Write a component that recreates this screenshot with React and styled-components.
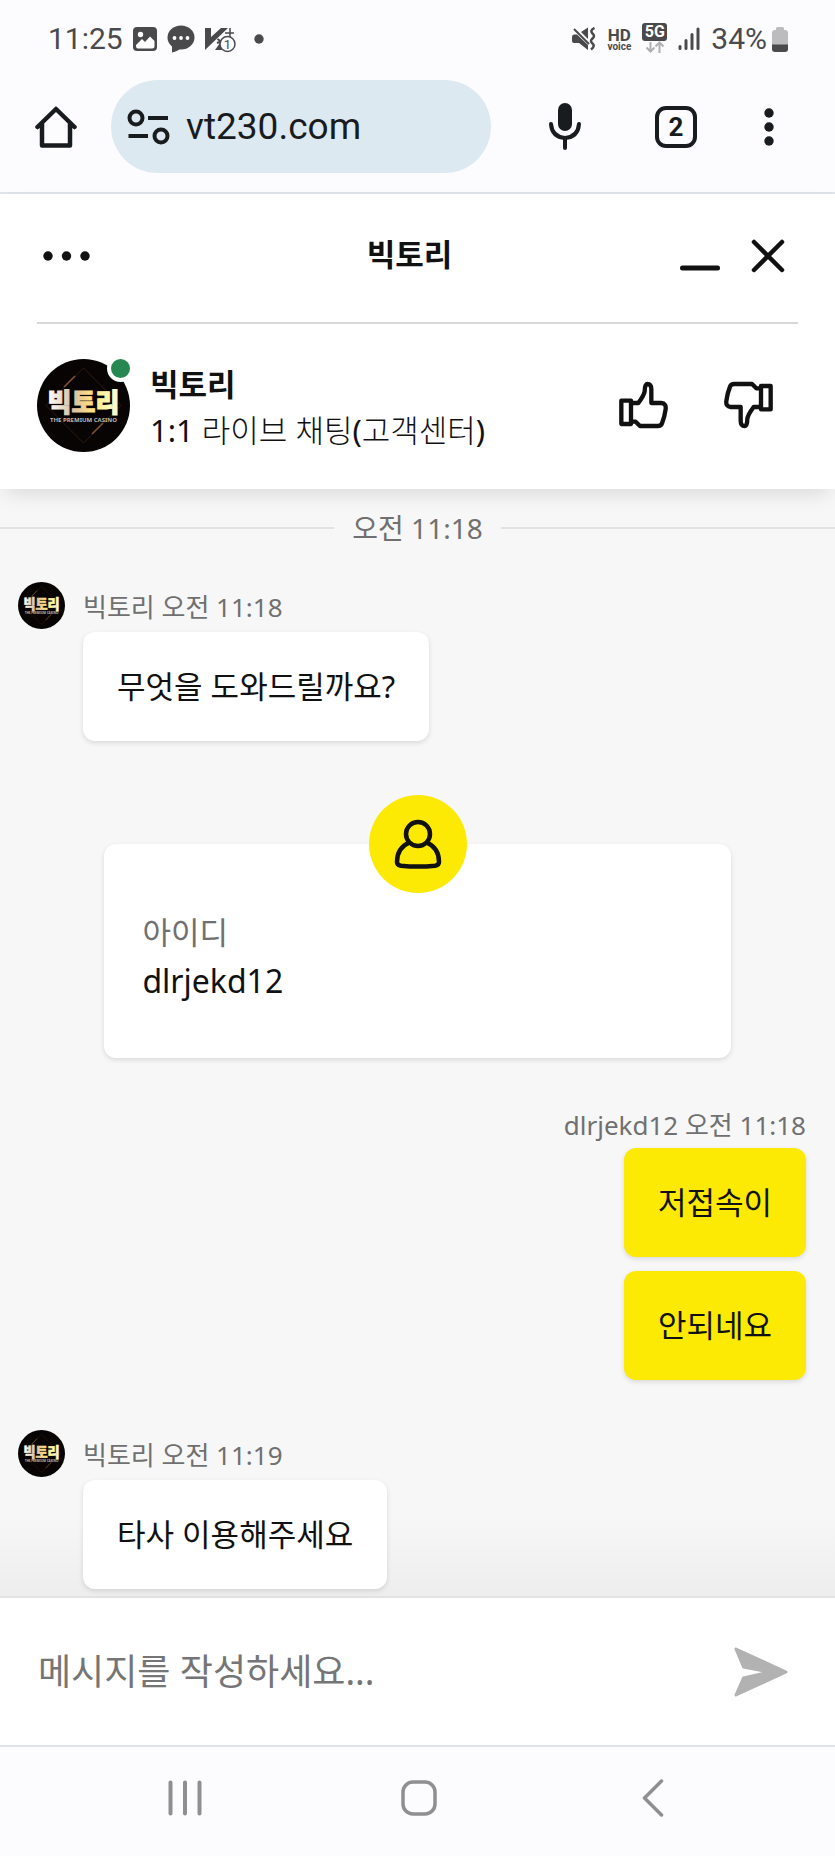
import React, { useState } from 'react'
import styled, { createGlobalStyle } from 'styled-components'

const GlobalStyle = createGlobalStyle`
  * {
    box-sizing: border-box;
  }
  body {
    margin: 0;
    background: #f7f7f7;
    font-family: "Noto Sans", "Noto Sans CJK KR", sans-serif;
    color: #111;
  }
  svg {
    display: block;
    flex: none;
  }
`

const Page = styled.div`
  display: flex;
  flex-direction: column;
  min-height: 100vh;
`

/* phone status bar */
const StatusBar = styled.div`
  display: flex;
  align-items: center;
  justify-content: space-between;
  height: 78px;
  padding: 0 47px 0 48px;
  background: #fcfcfe;
  color: #4a4a4c;
  font-family: Roboto, sans-serif;
  font-size: 30px;
  line-height: 34px;
`
const StatusGroup = styled.div`
  display: flex;
  align-items: center;
  gap: ${(props) => props.$gap};
`
const HdVoice = styled.div`
  display: flex;
  flex-direction: column;
  align-items: center;
`
const HdText = styled.span`
  font-size: 17px;
  font-weight: 700;
  line-height: 14px;
`
const VoiceText = styled.span`
  font-size: 10px;
  font-weight: 700;
  line-height: 9px;
`
const Network = styled.div`
  display: flex;
  flex-direction: column;
  align-items: center;
  padding-bottom: 2px;
`
const NetworkBadge = styled.span`
  width: 25px;
  border-radius: 3px;
  background: #4a4a4c;
  color: #fff;
  font-size: 16px;
  font-weight: 700;
  line-height: 18px;
  text-align: center;
`
const Battery = styled.div`
  display: flex;
  align-items: center;
  gap: 5px;
`

/* browser toolbar */
const Toolbar = styled.div`
  display: flex;
  align-items: center;
  height: 116px;
  padding: 0 10px 17px 32px;
  border-bottom: 2px solid #dde3e8;
  background: #fcfcfe;
`
const IconButton = styled.button`
  display: flex;
  align-items: center;
  justify-content: center;
  flex: none;
  width: ${(props) => props.$width || '48px'};
  height: 48px;
  padding: 0;
  border: none;
  background: none;
  color: ${(props) => props.$color || '#191c1e'};
  cursor: pointer;
`
const AddressPill = styled.div`
  display: flex;
  flex: 1;
  align-items: center;
  gap: 16px;
  min-width: 0;
  height: 93px;
  margin-left: 31px;
  padding: 0 24px 0 16px;
  border-radius: 47px;
  background: #dde9f1;
`
const AddressInput = styled.input`
  flex: 1;
  min-width: 0;
  padding: 0;
  border: none;
  outline: none;
  background: none;
  color: #191c1e;
  font-family: Roboto, sans-serif;
  font-size: 37px;
`
const TabCount = styled.span`
  display: flex;
  align-items: center;
  justify-content: center;
  width: 42px;
  height: 42px;
  border: 4px solid #191c1e;
  border-radius: 11px;
  font-family: Roboto, sans-serif;
  font-size: 26px;
  font-weight: 700;
  line-height: 34px;
`

/* chat header */
const ChatHeader = styled.header`
  position: relative;
  z-index: 1;
  padding: 0 37px;
  background: #fff;
  box-shadow: 0 10px 20px -6px rgba(0, 0, 0, 0.13);
`
const TitleBar = styled.div`
  display: grid;
  grid-template-columns: 110px 1fr 126px;
  align-items: center;
  height: 130px;
  padding-bottom: 4px;
  border-bottom: 2px solid #d8d8d8;
`
const Title = styled.h1`
  margin: 0;
  padding-bottom: 4px;
  font-size: 31px;
  font-weight: 700;
  line-height: 44px;
  text-align: center;
`
const WindowButtons = styled.div`
  display: flex;
  justify-content: flex-end;
  gap: 20px;
  padding-right: 6px;
`
const AgentBar = styled.div`
  display: flex;
  align-items: center;
  height: 165px;
  padding: 0 25px 3px 0;
`
const AvatarBox = styled.div`
  position: relative;
  flex: none;
`
const OnlineDot = styled.span`
  position: absolute;
  top: -4px;
  right: -4px;
  width: 27px;
  height: 27px;
  border: 4px solid #fff;
  border-radius: 50%;
  background: #268750;
`
const AgentInfo = styled.div`
  flex: 1;
  min-width: 0;
  margin-left: 20px;
  padding-top: 3px;
`
const AgentName = styled.div`
  font-size: 31px;
  font-weight: 700;
  line-height: 46px;
`
const AgentText = styled.div`
  font-family: "Noto Sans", "Noto Sans CJK KR Light", "Noto Sans CJK KR", sans-serif;
  font-size: 31px;
  line-height: 46px;
  white-space: nowrap;
`
const RateButtons = styled.div`
  display: flex;
  gap: 58px;
`

/* messages */
const Messages = styled.main`
  flex: 1;
  padding-bottom: 7px;
  background: linear-gradient(to top, rgba(0, 0, 0, 0.04), rgba(0, 0, 0, 0) 80px), #f7f7f7;
`
const TimeDivider = styled.div`
  display: flex;
  align-items: center;
  gap: 18px;
  height: 36px;
  margin-top: 21px;
  color: #707070;
  font-size: 28px;
  line-height: 36px;
  &::before,
  &::after {
    content: '';
    flex: 1;
    height: 2px;
    background: #e2e2e2;
  }
`
const AgentMessage = styled.section`
  display: flex;
  align-items: flex-start;
  gap: 18px;
  margin-top: ${(props) => props.$top};
  padding: 0 29px 0 18px;
`
const UserMessage = styled.section`
  display: flex;
  flex-direction: column;
  align-items: flex-end;
  margin-top: 49px;
  padding: 0 29px;
`
const Meta = styled.div`
  height: ${(props) => props.$height};
  color: #707070;
  font-size: 26px;
  line-height: 36px;
`
const AgentMeta = styled(Meta)`
  padding-top: 7px;
`
const Bubble = styled.div`
  width: fit-content;
  padding: 32px 34px 33px;
  border-radius: 12px;
  background: ${(props) => (props.$mine ? '#fcea05' : '#fff')};
  box-shadow: 0 2px 5px rgba(0, 0, 0, 0.12);
  font-size: 31px;
  line-height: 44px;
  & + & {
    margin-top: 14px;
  }
`
const ProfileCard = styled.section`
  position: relative;
  width: 75%;
  margin: 103px auto 0;
  padding: 64px 38px 53px;
  border-radius: 12px;
  background: #fff;
  box-shadow: 0 2px 5px rgba(0, 0, 0, 0.12);
`
const ProfileBadge = styled.div`
  position: absolute;
  top: -49px;
  left: 50%;
  display: flex;
  align-items: center;
  justify-content: center;
  width: 98px;
  height: 98px;
  margin-left: -49px;
  border-radius: 50%;
  background: #fcea05;
`
const FieldLabel = styled.div`
  color: #707070;
  font-size: 31px;
  line-height: 48px;
`
const FieldValue = styled.div`
  font-size: 32px;
  line-height: 49px;
`

/* composer + android navigation */
const Composer = styled.form`
  display: flex;
  align-items: center;
  height: 149px;
  padding: 0 38px;
  border-top: 2px solid #e2e2e2;
  background: #fff;
`
const MessageInput = styled.input`
  flex: 1;
  min-width: 0;
  padding: 0;
  border: none;
  outline: none;
  background: none;
  font-family: inherit;
  font-size: 36px;
  line-height: 52px;
  &::placeholder {
    color: #757575;
    opacity: 1;
  }
`
const NavBar = styled.nav`
  display: flex;
  align-items: center;
  justify-content: space-between;
  height: 112px;
  padding: 0 65px 8px 68px;
  border-top: 2px solid #dde3e8;
  background: #fcfcfe;
`

const PictureIcon = () => (
  <svg width="24" height="24" viewBox="0 0 24 24">
    <rect width="24" height="24" rx="4" fill="#4a4a4c" />
    <circle cx="7.500" cy="7.500" r="2.700" fill="#fff" />
    <path d="M3 18 L9 12 L12 15 L17 9.500 L21.500 14 V19 Q21.500 21.500 19 21.500 H5 Q3 21.500 3 19 Z" fill="#fff" />
  </svg>
)

const TalkIcon = () => (
  <svg width="28" height="28" viewBox="0 0 28 28">
    <ellipse cx="14" cy="12.500" rx="13.500" ry="12" fill="#4a4a4c" />
    <path d="M5 19 L5 27.500 Q11 26 14 23 Z" fill="#4a4a4c" />
    <circle cx="7.500" cy="13" r="1.900" fill="#fff" />
    <circle cx="14" cy="13" r="1.900" fill="#fff" />
    <circle cx="20.500" cy="13" r="1.900" fill="#fff" />
  </svg>
)

const VaccineIcon = () => (
  <svg width="31" height="28" viewBox="0 0 31 28">
    <path d="M0 3 H6 L6 12 L16 3 H23 L0 25 Z" fill="#4a4a4c" />
    <path d="M10 25 L15 18 L17 25 Z" fill="#4a4a4c" />
    <path d="M12.500 14 L16 16.500 L12 18" fill="none" stroke="#4a4a4c" strokeWidth="2" />
    <path d="M20 8 H29 M25 3 V12" stroke="#4a4a4c" strokeWidth="1.500" />
    <circle cx="22.500" cy="19" r="7.500" fill="#fcfcfe" stroke="#4a4a4c" strokeWidth="1.500" />
    <text x="22.500" y="24" textAnchor="middle" fontFamily="Roboto" fontSize="13" fill="#4a4a4c">1</text>
  </svg>
)

const MuteIcon = () => (
  <svg width="24" height="24" viewBox="0 0 24 24" fill="#4a4a4c">
    <path d="M0 10 Q0 7.500 2 7.500 H5 L16 18 V23 L7 16 H2 Q0 16 0 14 Z" />
    <path d="M9 5 L16 0.500 V12 Z" />
    <path d="M2 2 L17 17" stroke="#4a4a4c" strokeWidth="2" />
    <path d="M22.500 1 Q17.500 3.500 20.500 6.500 Q23.500 9 20.500 11.500 Q17.500 14 20.500 16.500 Q23.500 19 19 22.500" fill="none" stroke="#4a4a4c" strokeWidth="2.500" />
  </svg>
)

const DataArrows = () => (
  <svg width="18" height="12" viewBox="0 0 18 12" fill="none" stroke="#b0b0b2" strokeWidth="2">
    <path d="M4.500 1 V10 M0.500 6.500 L4.500 10.500 L8.500 6.500 M13.500 12 V2 M9.500 5.500 L13.500 1.500 L17.500 5.500" />
  </svg>
)

const SignalIcon = () => (
  <svg width="22" height="24" viewBox="0 0 22 24" stroke="#4a4a4c" strokeWidth="3" strokeLinecap="round">
    <path d="M2 19.500 V21.500 M8 13.500 V21.500 M14 7.500 V21.500 M20 2 V21.500" />
  </svg>
)

const BatteryIcon = () => (
  <svg width="16" height="25" viewBox="0 0 16 25">
    <path d="M4 1.500 Q4 0 5.500 0 H10.500 Q12 0 12 1.500 V3 H13 Q16 3 16 6 V18 H0 V6 Q0 3 3 3 H4 Z" fill="#bcbcbe" />
    <path d="M0 17.500 H16 V22 Q16 25 13 25 H3 Q0 25 0 22 Z" fill="#4a4a4c" />
  </svg>
)

const HomeIcon = () => (
  <svg width="42" height="42" viewBox="0 0 42 42" fill="none" stroke="currentColor" strokeWidth="4.500" strokeLinecap="round" strokeLinejoin="round">
    <path d="M2.500 21 L21 3 L39.500 21 M7 18 V39.500 H35 V18" />
  </svg>
)

const SiteIcon = () => (
  <svg width="43" height="36" viewBox="0 0 43 36" fill="none" stroke="#191c1e" strokeWidth="4">
    <circle cx="9" cy="9" r="6.500" />
    <path d="M21 9 H41 M1.500 27 H21" />
    <circle cx="34" cy="27" r="6.500" />
  </svg>
)

const MicIcon = () => (
  <svg width="34" height="48" viewBox="0 0 34 48" fill="none" stroke="currentColor" strokeWidth="4" strokeLinecap="round">
    <rect x="10" y="0" width="14" height="28" rx="7" fill="currentColor" stroke="none" />
    <path d="M3 21 Q4 34 17 35 Q30 34 31 21 M17 36 V45" />
  </svg>
)

const DotsIcon = ({ vertical }) => (
  <svg width={vertical ? 10 : 48} height={vertical ? 38 : 10} viewBox={vertical ? '0 0 10 38' : '0 0 48 10'} fill="currentColor">
    {[0, 1, 2].map((i) => (
      <circle key={i} cx={vertical ? 5 : 5 + i * 18.5} cy={vertical ? 5 + i * 14 : 5} r="4.700" />
    ))}
  </svg>
)

const MinimizeIcon = () => (
  <svg width="40" height="34" viewBox="0 0 40 34">
    <path d="M2.500 29 H37.500" stroke="currentColor" strokeWidth="5" strokeLinecap="round" />
  </svg>
)

const CloseIcon = () => (
  <svg width="34" height="34" viewBox="0 0 34 34">
    <path d="M3 3 L31 31 M31 3 L3 31" stroke="currentColor" strokeWidth="4.500" strokeLinecap="round" />
  </svg>
)

const ThumbIcon = ({ down }) => (
  <svg width="50" height="48" viewBox="0 0 150 144" fill="none" stroke="currentColor" strokeWidth="13" strokeLinejoin="round">
    <g transform={down ? 'rotate(180 75 72)' : undefined}>
      <rect x="10" y="59" width="29" height="70" />
      <path d="M40 66 H61 Q78 43 80 31 Q80 10 88 9 Q100 9 100 25 V66 H130 Q145 67 143 84 Q140 107 132 127 Q129 135 119 135 H66 L53 122 H40" />
    </g>
  </svg>
)

const UserIcon = () => (
  <svg width="48" height="50" viewBox="0 0 48 50" fill="none" stroke="#111" strokeWidth="4.500" strokeLinejoin="round">
    <circle cx="24" cy="15" r="12" />
    <path d="M15.500 23.500 C7 27 3 33 3 43 Q3 46 7 46.700 Q24 48.500 41 46.700 Q45 46 45 43 C45 33 41 27 32.500 23.500" />
  </svg>
)

const SendIcon = () => (
  <svg width="54" height="50" viewBox="0 0 54 50">
    <path d="M2 2 L52 25 L2 48 L9.500 31 L36 25 L9.500 20 Z" fill="#b2b2b2" stroke="#b2b2b2" strokeWidth="3" strokeLinejoin="round" />
  </svg>
)

const RecentsIcon = () => (
  <svg width="34" height="36" viewBox="0 0 34 36">
    <path d="M2.500 2.500 V33.500 M17 2.500 V33.500 M31.500 2.500 V33.500" stroke="#8f8f91" strokeWidth="4" strokeLinecap="round" />
  </svg>
)

const NavHomeIcon = () => (
  <svg width="36" height="36" viewBox="0 0 36 36">
    <rect x="2" y="2" width="32" height="32" rx="10" fill="none" stroke="#8f8f91" strokeWidth="3.500" />
  </svg>
)

const BackIcon = () => (
  <svg width="22" height="38" viewBox="0 0 22 38">
    <path d="M19.500 2 L2.500 19 L19.500 36" fill="none" stroke="#8f8f91" strokeWidth="3.500" strokeLinecap="round" strokeLinejoin="round" />
  </svg>
)

const Avatar = ({ size }) => {
  const gold = `gold-${React.useId()}`
  return (
    <svg width={size} height={size} viewBox="0 0 93 93" role="img" aria-label="빅토리">
      <defs>
        <linearGradient id={gold} x1="0" x2="1" y1="0" y2="0">
          <stop offset="0" stopColor="#fff" />
          <stop offset="0.350" stopColor="#d9bfa4" />
          <stop offset="0.600" stopColor="#ffdf80" />
          <stop offset="0.800" stopColor="#fff6a8" />
          <stop offset="1" stopColor="#fffce0" />
        </linearGradient>
      </defs>
      <circle cx="46.500" cy="46.500" r="46.500" fill="#080403" />
      <path d="M46.500 9 L84 46.500 L46.500 84 L9 46.500 Z" fill="none" stroke="#2e1d10" strokeWidth="1" />
      <path d="M27 28 L38 17 M55 75 L66 64" stroke="#80552b" strokeWidth="1.500" />
      <text x="46.500" y="53" textAnchor="middle" fontFamily="Noto Sans CJK KR" fontSize="26" fontWeight="900" fill={`url(#${gold})`} stroke={`url(#${gold})`} strokeWidth="1">빅토리</text>
      <text x="46.500" y="63" textAnchor="middle" fontFamily="Noto Sans" fontSize="6" fontWeight="700" fill="#bdb8b0">THE PREMIUM CASINO</text>
    </svg>
  )
}

const App = () => {
  const [message, setMessage] = useState('')

  const handleSubmit = (e) => {
    e.preventDefault()
    setMessage('')
  }

  return (
    <Page>
      <GlobalStyle />
      <StatusBar>
        <StatusGroup $gap="10px">
          <span>11:25</span>
          <PictureIcon />
          <TalkIcon />
          <VaccineIcon />
          <svg width="32" height="10" viewBox="0 0 32 10">
            <circle cx="13" cy="5" r="4.700" fill="#4a4a4c" />
          </svg>
        </StatusGroup>
        <StatusGroup $gap="11px">
          <MuteIcon />
          <HdVoice>
            <HdText>HD</HdText>
            <VoiceText>voice</VoiceText>
          </HdVoice>
          <Network>
            <NetworkBadge>5G</NetworkBadge>
            <DataArrows />
          </Network>
          <SignalIcon />
          <Battery>
            <span>34%</span>
            <BatteryIcon />
          </Battery>
        </StatusGroup>
      </StatusBar>

      <Toolbar>
        <IconButton aria-label="홈"><HomeIcon /></IconButton>
        <AddressPill>
          <SiteIcon />
          <AddressInput aria-label="주소" defaultValue="vt230.com" />
        </AddressPill>
        <IconButton $width="148px" aria-label="음성 검색"><MicIcon /></IconButton>
        <IconButton $width="74px" aria-label="탭"><TabCount>2</TabCount></IconButton>
        <IconButton $width="112px" aria-label="더보기"><DotsIcon vertical /></IconButton>
      </Toolbar>

      <ChatHeader>
        <TitleBar>
          <IconButton $width="60px" $color="#111" aria-label="메뉴"><DotsIcon /></IconButton>
          <Title>빅토리</Title>
          <WindowButtons>
            <IconButton $color="#111" aria-label="최소화"><MinimizeIcon /></IconButton>
            <IconButton $color="#111" aria-label="닫기"><CloseIcon /></IconButton>
          </WindowButtons>
        </TitleBar>
        <AgentBar>
          <AvatarBox>
            <Avatar size={93} />
            <OnlineDot />
          </AvatarBox>
          <AgentInfo>
            <AgentName>빅토리</AgentName>
            <AgentText>1:1 라이브 채팅(고객센터)</AgentText>
          </AgentInfo>
          <RateButtons>
            <IconButton $color="#111" aria-label="좋아요"><ThumbIcon /></IconButton>
            <IconButton $color="#111" aria-label="싫어요"><ThumbIcon down /></IconButton>
          </RateButtons>
        </AgentBar>
      </ChatHeader>

      <Messages>
        <TimeDivider>오전 11:18</TimeDivider>

        <AgentMessage $top="36px">
          <Avatar size={47} />
          <div>
            <AgentMeta $height="50px">빅토리 오전 11:18</AgentMeta>
            <Bubble>무엇을 도와드릴까요?</Bubble>
          </div>
        </AgentMessage>

        <ProfileCard>
          <ProfileBadge><UserIcon /></ProfileBadge>
          <FieldLabel>아이디</FieldLabel>
          <FieldValue>dlrjekd12</FieldValue>
        </ProfileCard>

        <UserMessage>
          <Meta $height="41px">dlrjekd12 오전 11:18</Meta>
          <Bubble $mine>저접속이</Bubble>
          <Bubble $mine>안되네요</Bubble>
        </UserMessage>

        <AgentMessage $top="50px">
          <Avatar size={47} />
          <div>
            <AgentMeta $height="50px">빅토리 오전 11:19</AgentMeta>
            <Bubble>타사 이용해주세요</Bubble>
          </div>
        </AgentMessage>
      </Messages>

      <Composer onSubmit={handleSubmit}>
        <MessageInput
          aria-label="메시지"
          placeholder="메시지를 작성하세요..."
          value={message}
          onChange={(e) => setMessage(e.target.value)}
        />
        <IconButton type="submit" $width="72px" aria-label="보내기"><SendIcon /></IconButton>
      </Composer>

      <NavBar>
        <IconButton $width="234px" aria-label="최근 앱"><RecentsIcon /></IconButton>
        <IconButton $width="234px" aria-label="홈 화면"><NavHomeIcon /></IconButton>
        <IconButton $width="234px" aria-label="뒤로"><BackIcon /></IconButton>
      </NavBar>
    </Page>
  )
}

export default App
